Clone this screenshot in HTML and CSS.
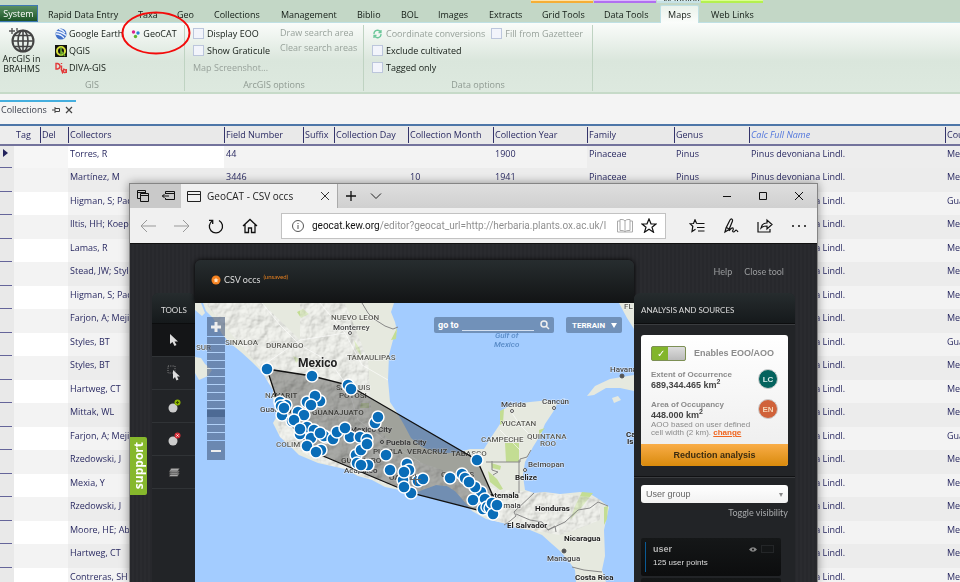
FILE: index.html
```html
<!DOCTYPE html>
<html lang="en">
<head>
  <meta charset="UTF-8">
  <meta name="viewport" content="width=device-width, initial-scale=1.0">
  <title>BRAHMS - Collections</title>
  <link rel="stylesheet" href="styles.css">
</head>
<body>
  <div class="desktop">

    <header class="ribbon">
      <div class="context-strip">
        <span class="context grid-tools"></span>
        <span class="context data-tools"></span>
        <span class="context mapping">Mapping</span>
        <span class="context web"></span>
      </div>
      <nav class="ribbon-tabs">
        <button class="system">System</button>
        <a href="#" class="w-entry">Rapid Data Entry</a>
        <a href="#" class="w-taxa">Taxa</a>
        <a href="#" class="w-geo">Geo</a>
        <a href="#" class="w-coll">Collections</a>
        <a href="#" class="w-man">Management</a>
        <a href="#" class="w-bib">Biblio</a>
        <a href="#" class="w-bol">BOL</a>
        <a href="#" class="w-img">Images</a>
        <a href="#" class="w-ext">Extracts</a>
        <a href="#" class="w-tool">Grid Tools</a>
        <a href="#" class="w-tool">Data Tools</a>
        <a href="#" class="active">Maps</a>
        <a href="#" class="w-web">Web Links</a>
      </nav>

      <div class="ribbon-panel">
        <section class="group group-gis">
          <div class="group-body">
            <button class="big-button">
              <svg width="26" height="27" viewBox="0 0 26 27" fill="none" stroke="#444" stroke-width="2">
                <circle cx="14" cy="14" r="10.5"/>
                <ellipse cx="14" cy="14" rx="5" ry="10.5" stroke-width="1.6"/>
                <path d="M3.5 14h21M14 3.500v21M5.500 8.500h17M5.500 19.500h17" stroke-width="1.6"/>
                <path d="M3 1v6M0 4h6M8 1v3" stroke="#555" stroke-width="1.400"/>
              </svg>
              ArcGIS in<br>BRAHMS
            </button>
            <div class="stack">
              <button class="tool">
                <svg width="12" height="12" viewBox="0 0 12 12"><circle cx="6" cy="6" r="5.500" fill="#3f6fc8"/><path d="M1 3.500q5 0 10 4M1 6q5 0 8 4M4 1q4 1 6 4" stroke="#e8f0ff" stroke-width="1.300" fill="none"/></svg>
                Google Earth
              </button>
              <button class="tool">
                <svg width="12" height="12" viewBox="0 0 12 12"><path fill="#111" d="M0 0h12v12H0z"/><circle cx="6" cy="6" r="4" fill="none" stroke="#d8e03c" stroke-width="2"/><path d="M6 2v9M6 6l4 5" stroke="#6fae2c" stroke-width="1.500"/></svg>
                QGIS
              </button>
              <button class="tool">
                <svg width="12" height="12" viewBox="0 0 12 12" fill="none" stroke="#e23a3a" stroke-width="1.400"><path d="M1 1.500v5.500h1.500q2.500-.5 2.500-2.700T2.500 1.500zM6.500 3.500V7M6.500 1v1M6 6.500l1.500 4 1.500-4M11.500 7v4M11 9a1.300 1.500 0 1 0 0 .2"/></svg>
                DIVA-GIS
              </button>
            </div>
            <div class="stack">
              <button class="tool geocat">
                <svg width="10" height="10" viewBox="0 0 10 10"><circle cx="2.500" cy="3" r="1.700" fill="#e0218a"/><circle cx="7" cy="4" r="1.700" fill="#2484d8"/><circle cx="4.500" cy="7.500" r="1.700" fill="#5cb531"/></svg>
                GeoCAT
                <svg class="highlight" width="70" height="44" viewBox="0 0 70 44"><ellipse cx="35" cy="22" rx="33.500" ry="20.500" fill="none" stroke="#f30b0b" stroke-width="2"/></svg>
              </button>
            </div>
          </div>
          <h3>GIS</h3>
        </section>

        <section class="group group-options">
          <div class="group-body">
            <div class="stack">
              <label class="tool"><input type="checkbox"> Display EOO</label>
              <label class="tool"><input type="checkbox"> Show Graticule</label>
              <button class="tool" disabled>Map Screenshot...</button>
            </div>
            <div class="stack tight">
              <button class="tool" disabled>Draw search area</button>
              <button class="tool" disabled>Clear search areas</button>
            </div>
          </div>
          <h3>ArcGIS options</h3>
        </section>

        <section class="group group-data">
          <div class="group-body">
            <div class="stack">
              <button class="tool" disabled>
                <svg width="11" height="10" viewBox="0 0 10 10" fill="none" stroke="#6cc79a" stroke-width="1.300"><path d="M1.500 5a3.500 3.500 0 0 1 6.500-2M8.500 5a3.500 3.500 0 0 1-6.500 2M8.500 1v2.500H6M1.500 9V6.500H4"/></svg>
                Coordinate conversions
              </button>
              <label class="tool"><input type="checkbox"> Exclude cultivated</label>
              <label class="tool"><input type="checkbox"> Tagged only</label>
            </div>
            <div class="stack">
              <label class="tool disabled"><input type="checkbox" disabled> Fill from Gazetteer</label>
            </div>
          </div>
          <h3>Data options</h3>
        </section>
      </div>
    </header>

    <div class="doc-tabs">
      <div class="doc-tab">
        Collections
        <svg width="8" height="8" viewBox="0 0 8 8" fill="none" stroke="#444"><path d="M0 4h3M3 1v6M3 2.500h4.500v3H3"/></svg>
        <button aria-label="Close tab"><svg width="8" height="8" viewBox="0 0 8 8" stroke="#444" stroke-width="1.200"><path d="M1 1l6 6M7 1l-6 6"/></svg></button>
      </div>
    </div>

    <table class="records">
      <colgroup>
        <col class="c-head"><col class="c-tag"><col class="c-del"><col class="c-collectors">
        <col class="c-number"><col class="c-suffix"><col class="c-day"><col class="c-month">
        <col class="c-year"><col class="c-family"><col class="c-genus"><col class="c-name"><col>
      </colgroup>
      <thead>
        <tr><th class="row-head"></th><th>Tag</th><th>Del</th><th>Collectors</th><th>Field Number</th><th>Suffix</th><th>Collection Day</th><th>Collection Month</th><th>Collection Year</th><th>Family</th><th>Genus</th><th class="calc">Calc Full Name</th><th>Country</th></tr>
      </thead>
      <tbody>
        <tr class="current"><td class="row-head"><svg width="5" height="8" viewBox="0 0 5 8"><path d="M0 0l5 4-5 4z" fill="#22225c"/></svg></td><td class="mark"></td><td class="mark"></td><td class="editing">Torres, R</td><td>44</td><td></td><td></td><td></td><td>1900</td><td class="locked">Pinaceae</td><td class="locked">Pinus</td><td class="locked">Pinus devoniana Lindl.</td><td class="locked">Mexico</td></tr>
        <tr><td class="row-head"></td><td class="mark"></td><td class="mark"></td><td>Martínez, M</td><td>3446</td><td></td><td></td><td>10</td><td>1941</td><td>Pinaceae</td><td>Pinus</td><td>Pinus devoniana Lindl.</td><td>Mexico</td></tr>
        <tr><td class="row-head"></td><td class="mark"></td><td class="mark"></td><td>Higman, S; Pac</td><td colspan="7"></td><td>Pinus devoniana Lindl.</td><td>Guatemala</td></tr>
        <tr><td class="row-head"></td><td class="mark"></td><td class="mark"></td><td>Iltis, HH; Koep</td><td colspan="7"></td><td>Pinus devoniana Lindl.</td><td>Mexico</td></tr>
        <tr><td class="row-head"></td><td class="mark"></td><td class="mark"></td><td>Lamas, R</td><td colspan="7"></td><td>Pinus devoniana Lindl.</td><td>Mexico</td></tr>
        <tr><td class="row-head"></td><td class="mark"></td><td class="mark"></td><td>Stead, JW; Styles</td><td colspan="7"></td><td>Pinus devoniana Lindl.</td><td>Mexico</td></tr>
        <tr><td class="row-head"></td><td class="mark"></td><td class="mark"></td><td>Higman, S; Pac</td><td colspan="7"></td><td>Pinus devoniana Lindl.</td><td>Mexico</td></tr>
        <tr><td class="row-head"></td><td class="mark"></td><td class="mark"></td><td>Farjon, A; Mejia</td><td colspan="7"></td><td>Pinus devoniana Lindl.</td><td>Mexico</td></tr>
        <tr><td class="row-head"></td><td class="mark"></td><td class="mark"></td><td>Styles, BT</td><td colspan="7"></td><td>Pinus devoniana Lindl.</td><td>Guatemala</td></tr>
        <tr><td class="row-head"></td><td class="mark"></td><td class="mark"></td><td>Styles, BT</td><td colspan="7"></td><td>Pinus devoniana Lindl.</td><td>Mexico</td></tr>
        <tr><td class="row-head"></td><td class="mark"></td><td class="mark"></td><td>Hartweg, CT</td><td colspan="7"></td><td>Pinus devoniana Lindl.</td><td>Mexico</td></tr>
        <tr><td class="row-head"></td><td class="mark"></td><td class="mark"></td><td>Mittak, WL</td><td colspan="7"></td><td>Pinus devoniana Lindl.</td><td>Mexico</td></tr>
        <tr><td class="row-head"></td><td class="mark"></td><td class="mark"></td><td>Farjon, A; Mejia</td><td colspan="7"></td><td>Pinus devoniana Lindl.</td><td>Guatemala</td></tr>
        <tr><td class="row-head"></td><td class="mark"></td><td class="mark"></td><td>Rzedowski, J</td><td colspan="7"></td><td>Pinus devoniana Lindl.</td><td>Mexico</td></tr>
        <tr><td class="row-head"></td><td class="mark"></td><td class="mark"></td><td>Mexia, Y</td><td colspan="7"></td><td>Pinus devoniana Lindl.</td><td>Mexico</td></tr>
        <tr><td class="row-head"></td><td class="mark"></td><td class="mark"></td><td>Rzedowski, J</td><td colspan="7"></td><td>Pinus devoniana Lindl.</td><td>Mexico</td></tr>
        <tr><td class="row-head"></td><td class="mark"></td><td class="mark"></td><td>Moore, HE; Abbe</td><td colspan="7"></td><td>Pinus devoniana Lindl.</td><td>Mexico</td></tr>
        <tr><td class="row-head"></td><td class="mark"></td><td class="mark"></td><td>Hartweg, CT</td><td colspan="7"></td><td>Pinus devoniana Lindl.</td><td>Mexico</td></tr>
        <tr><td class="row-head"></td><td class="mark"></td><td class="mark"></td><td>Contreras, SH</td><td colspan="7"></td><td>Pinus devoniana Lindl.</td><td>Mexico</td></tr>
      </tbody>
    </table>

    <div class="window">
      <div class="title-bar">
        <div class="tab-tools">
          <button aria-label="Tabs set aside"><svg width="12" height="12" viewBox="0 0 12 12" fill="none" stroke="#111"><path d="M3.500 8.500h-3v-8h8v3M.5 2.500h8M3.500 3.500h8v8h-8zM3.500 5.500h8"/></svg></button>
          <button aria-label="Set tabs aside"><svg width="13" height="10" viewBox="0 0 13 10" fill="none" stroke="#111"><path d="M3.500 3V.5h9v8h-9V7M3.500 2.500h9M0 5h7M2.500 3L.5 5l2 2"/></svg></button>
        </div>
        <div class="tab">
          <svg width="14" height="12" viewBox="0 0 14 12" fill="none" stroke="#222"><path d="M.5 1.500h13v10H.5zM.5 4.500h13"/></svg>
          <span>GeoCAT - CSV occs</span>
          <button aria-label="Close tab"><svg width="10" height="10" viewBox="0 0 10 10" stroke="#333"><path d="M1 1l8 8M9 1L1 9"/></svg></button>
        </div>
        <button class="new-tab" aria-label="New tab"><svg width="12" height="12" viewBox="0 0 12 12" stroke="#111" stroke-width="1.300"><path d="M6 1v10M1 6h10"/></svg></button>
        <button aria-label="Tab previews"><svg width="12" height="12" viewBox="0 0 12 12" fill="none" stroke="#222"><path d="M1 3.500l5 5 5-5"/></svg></button>
        <div class="window-buttons">
          <button aria-label="Minimize"><svg width="10" height="10" viewBox="0 0 10 10" stroke="#111"><path d="M1 5.500h8"/></svg></button>
          <button aria-label="Maximize"><svg width="10" height="10" viewBox="0 0 10 10" fill="none" stroke="#111"><path d="M1.500 1.500h7v7h-7z"/></svg></button>
          <button aria-label="Close"><svg width="10" height="10" viewBox="0 0 10 10" stroke="#111"><path d="M1 1l8 8M9 1L1 9"/></svg></button>
        </div>
      </div>

      <div class="nav-bar">
        <button aria-label="Back"><svg width="16" height="14" viewBox="0 0 16 14" fill="none" stroke="#999"><path d="M16 7H1M7 1L1 7l6 6"/></svg></button>
        <button aria-label="Forward"><svg width="16" height="14" viewBox="0 0 16 14" fill="none" stroke="#999"><path d="M0 7h15M9 1l6 6-6 6"/></svg></button>
        <button aria-label="Refresh"><svg width="16" height="16" viewBox="0 0 16 16" fill="none" stroke="#111" stroke-width="1.300"><path d="M11 2.500A6.600 6.600 0 1 1 4.500 2.700M4.700 6V2.300H1"/></svg></button>
        <button aria-label="Home"><svg width="16" height="16" viewBox="0 0 16 16" fill="none" stroke="#111" stroke-width="1.300"><path d="M1 8l7-6.500L15 8M3 6.500v8h3.500V10h3v4.500H13v-8"/></svg></button>
        <div class="address">
          <svg width="12" height="12" viewBox="0 0 12 12" fill="none" stroke="#555"><circle cx="6" cy="6" r="5.500"/><path d="M6 5v4M6 3v1"/></svg>
          <input type="text" aria-label="Address" value="geocat.kew.org/editor?geocat_url=http://herbaria.plants.ox.ac.uk/l">
          <svg width="16" height="14" viewBox="0 0 16 14" fill="none" stroke="#aaa"><path d="M8 2v11M8 2Q7 .5 5 .5H3v11h2q2 0 3 1.500M8 2q1-1.500 3-1.500h2v11h-2q-2 0-3 1.500M3 2H.5v11h15V2H13"/></svg>
          <svg width="16" height="15" viewBox="0 0 16 15" fill="none" stroke="#111" stroke-width="1.200"><path d="M8 1l2 4.800 5 .2-4 3.200 1.500 5L8 11.300l-4.500 2.900L5 9.200 1 6l5-.2z"/></svg>
        </div>
        <div class="nav-tools">
          <button aria-label="Hub"><svg width="16" height="14" viewBox="0 0 16 14" fill="none" stroke="#111" stroke-width="1.200"><path d="M10 4.500L7.500 4.300 6 .8 4.500 4.500 1 4.700l2.800 2.500L3 12.500l3.500-2.300M9 4.500h6.500M8 8.500h7.500M9 12h6.500"/></svg></button>
          <button aria-label="Make a web note"><svg width="16" height="16" viewBox="0 0 16 16" fill="none" stroke="#111" stroke-width="1.200"><path d="M2 14l1-4 4-8q1-1.500 2-.8t.4 2L6 11.500zM3.500 9.500l2.500 1.500M6 13q3-4 4-3t-.5 3q1 2 2.500 0t3 1"/></svg></button>
          <button aria-label="Share"><svg width="16" height="15" viewBox="0 0 16 15" fill="none" stroke="#111" stroke-width="1.200"><path d="M1 4v10h12v-3M4 10q1-5 6-5V2l5 4.500L10 11V8Q6 8 4 10z"/></svg></button>
          <button aria-label="More"><svg width="16" height="4" viewBox="0 0 16 4" fill="#111"><circle cx="2" cy="2" r="1"/><circle cx="8" cy="2" r="1"/><circle cx="14" cy="2" r="1"/></svg></button>
        </div>
      </div>

      <main class="page">
        <div class="page-links">
          <a href="#">Help</a>
          <a href="#">Close tool</a>
        </div>
        <button class="support">support</button>

        <div class="editor">
          <aside class="tools">
            <h2>TOOLS</h2>
            <button class="active" aria-label="Select"><svg width="10" height="14" viewBox="0 0 10 14" fill="#ddd"><path d="M1 1v10l2.500-2 2 4 2-1-2-3.500H9z"/></svg></button>
            <button aria-label="Select area"><svg width="14" height="16" viewBox="0 0 14 16"><path d="M1 1h7v7H1z" fill="none" stroke="#888" stroke-dasharray="1 1.300"/><path d="M6 5v9l2-2 1.500 3.500 2-1L10 11.500h3z" fill="#ddd"/></svg></button>
            <button aria-label="Add point"><svg width="14" height="14" viewBox="0 0 14 14"><circle cx="6" cy="9" r="4.500" fill="#ccc"/><circle cx="10.500" cy="3.500" r="3" fill="#8db600"/><path d="M10.500 2v3M9 3.500h3" stroke="#3c4d00"/></svg></button>
            <button aria-label="Delete point"><svg width="14" height="14" viewBox="0 0 14 14"><circle cx="6" cy="9" r="4.500" fill="#ccc"/><circle cx="10.500" cy="3.500" r="3" fill="#d6303a"/><path d="M9.500 2.500l2 2M11.500 2.500l-2 2" stroke="#fff"/></svg></button>
            <button aria-label="Layers"><svg width="12" height="10" viewBox="0 0 12 10" fill="#aaa" stroke="#333" stroke-width=".5"><path d="M1 9.500l2-3.500h8.500l-2 3.500zM1 7.500L3 4h8.500l-2 3.500zM1 5.300l2-4h8.500l-2 4z"/></svg></button>
          </aside>

          <section class="map-panel">
            <h1>
              <svg width="10" height="10" viewBox="0 0 10 10"><circle cx="5" cy="5" r="4.500" fill="#f58220"/><path d="M5 2.500l.8 1.700 1.700.3-1.200 1.200.3 1.800L5 6.700l-1.600.8.3-1.800-1.200-1.200 1.700-.3z" fill="#ffe3c4"/></svg>
              CSV occs <sup>(unsaved)</sup>
            </h1>
            <div class="map">
              <svg class="map-canvas" viewBox="195 303 439 279" preserveAspectRatio="xMidYMid slice">
                <defs>
                  <filter id="relief" x="0" y="0" width="100%" height="100%">
                    <feTurbulence type="fractalNoise" baseFrequency=".09" numOctaves="4" seed="8"/>
                    <feDiffuseLighting surfaceScale="3" lighting-color="#fff"><feDistantLight azimuth="225" elevation="55"/></feDiffuseLighting>
                  </filter>
                  <clipPath id="land-clip"><use href="#land"/></clipPath>
                  <clipPath id="hills"><path d="M205 303L262 303 300 340 300 303 345 303 368 360 372 420 400 455 470 480 500 490 540 492 600 498 600 520 575 530 560 535 500 525 440 486 410 492 320 462 280 440 275 400 262 370z"/></clipPath>
                </defs>
                <path fill="#a3ccff" d="M195 303h439v279H195z"/>
                <path id="land" fill="#e6e9df" d="M203 303L206 311 213 318 222 334 230 343 241 352 252 362 262 372 268 382 273 390 273 400 279 408 277 416 273 423 280 437 290 446 299 455 318 463 345 469 358 476 372 480 385 487 400 490 412 494 425 489 436 485 447 486 455 491 463 500 472 511 486 519 507 524 516 528 530 530 542 535 552 544 560 551 568 560 575 570 576 582 606 582 602 570 605 556 604 530 609 507 600 500 592 495 580 492 560 494 545 492 534 493 525 490 523 476 525 462 533 447 541 434 545 424 553 412 557 404 550 400 530 402 513 404 502 410 500 424 492 436 484 449 477 449 470 449 460 452 447 453 435 452 422 447 411 438 403 423 396 411 390 402 388 380 389 355 393 340 397 331 395 322 391 312 394 303z"/>
                <path fill="#e6e9df" d="M195 357L201 358 205 364 212 370 208 376 199 380 195 373zM195 303h6l4 10-3 3-7-6zM587 396L595 386 610 379 634 375 634 391 620 388 606 388 594 395zM612 398l6-2 3 4-7 3zM619 303h15v26l-7-11z"/>
                <g fill="#c3dd93">
                  <path d="M505 443h14v19h-13zM491 463l10 3-1 4-8-2zM500 411l4-2-1 14-3 2zM582 492l11 1-12 15-11 12 5-14zM297 312l6-3 6 5-8 4zM361 403h8v5h-9zM391 340l6-12-1 11zM539 430l6-2-6 7zM604 507l4-1-1 13-3 6zM354 340l6 9 1 7-5-7zM488 471l9 8 6 10-3 1-10-8zM293 356l7 3-4 4z"/>
                </g>
                <g clip-path="url(#land-clip)">
                  <g clip-path="url(#hills)"><path class="relief" d="M195 303h439v279H195z" filter="url(#relief)"/></g>
                </g>
                <g fill="none" stroke="#fff" opacity=".6">
                  <path d="M262 303L280 325 300 345 330 362 348 387 358 420 385 440 420 462M320 303L345 333 362 365 388 380M510 410L520 425 535 440M500 430L520 450M345 333L300 340 262 366"/>
                </g>
                <path fill="none" stroke="#888" d="M362 303L368 313 374 319 385 326 393 329 398 327M486 462h34v-3M492 461v9l6 2-5 3M519 460v33M534 493L514 512 516 516 510 521 504 525M516 514L530 520 542 522 548 530 555 526 556 532M548 530L565 522 578 510 590 508 598 502 608 506M572 567L584 570 602 572M520 459L527 457 531 450"/>

                <g class="map-labels">
                  <text x="331" y="320">NUEVO LEON</text>
                  <text class="town" x="333" y="330">Monterrey</text>
                  <text x="347" y="360">TAMAULIPAS</text>
                  <text x="225" y="345">SINALOA</text>
                  <text x="266" y="348">DURANGO</text>
                  <text x="196" y="350">SUR</text>
                  <text class="country" x="298" y="367">Mexico</text>
                  <text class="sea" x="495" y="338">Gulf of</text>
                  <text class="sea" x="494" y="347">Mexico</text>
                  <text x="265" y="398">NAYARIT</text>
                  <text class="town" x="260" y="412">Guadalajara</text>
                  <text x="336" y="390">SAN LUIS</text>
                  <text x="339" y="398">POTOSI</text>
                  <text x="312" y="415">GUANAJUATO</text>
                  <text x="276" y="447">COLIMA</text>
                  <text class="town" x="350" y="432">Mexico City</text>
                  <text class="town" x="386" y="445">Puebla City</text>
                  <text x="373" y="454">PUEBLA</text>
                  <text x="407" y="454">VERACRUZ</text>
                  <text x="451" y="456">TABASCO</text>
                  <text x="341" y="463">GUERRERO</text>
                  <text class="town" x="344" y="473">Acapulco</text>
                  <text x="389" y="480">OAXACA</text>
                  <text x="441" y="477">CHIAPAS</text>
                  <text class="town" x="501" y="407">Mérida</text>
                  <text class="town" x="542" y="404">Cancún</text>
                  <text x="501" y="426">YUCATAN</text>
                  <text x="481" y="442">CAMPECHE</text>
                  <text x="527" y="439">QUINTANA</text>
                  <text x="540" y="446">ROO</text>
                  <text class="town" x="528" y="467">Belmopan</text>
                  <text class="nation" x="515" y="480">Belize</text>
                  <text class="nation" x="480" y="498">Guatemala</text>
                  <text class="town" x="482" y="508">Guatemala</text>
                  <text class="nation" x="535" y="511">Honduras</text>
                  <text class="nation" x="507" y="528">El Salvador</text>
                  <text class="nation" x="564" y="541">Nicaragua</text>
                  <text class="town" x="547" y="561">Managua</text>
                  <text class="nation" x="575" y="580">Costa Rica</text>
                  <text class="town" x="610" y="372">Havana</text>
                  <text class="nation" x="626" y="437">Ca</text>
                  <text class="nation" x="627" y="444">Is</text>
                  <text x="624" y="309">FL</text>
                </g>
                <g fill="#fff" stroke="#555"><circle cx="350" cy="333" r="1.500"/><circle cx="382" cy="442" r="1.500"/><circle cx="512" cy="411" r="1.500"/><circle cx="554" cy="408" r="1.500"/><circle cx="525" cy="470" r="1.500"/><circle cx="564" cy="551" r="2" fill="#555"/><circle cx="622" cy="376" r="2" fill="#555"/></g>

                <path fill="#000" fill-opacity=".3" stroke="#111" stroke-width="1.300" d="M267 369L312 376 348 385 477 460 497 505 493 514 411 493 316 453 282 415z"/>
                <g class="points">
                  <circle cx="267" cy="369" r="6"/><circle cx="312" cy="376" r="6"/><circle cx="348" cy="385" r="6"/><circle cx="351" cy="389" r="6"/>
                  <circle cx="320" cy="401" r="6"/><circle cx="307" cy="402" r="6"/><circle cx="315" cy="396" r="6"/><circle cx="311" cy="405" r="6"/>
                  <circle cx="280" cy="402" r="6"/><circle cx="286" cy="405" r="6"/><circle cx="282" cy="415" r="6"/><circle cx="281" cy="406" r="6"/><circle cx="284" cy="408" r="6"/>
                  <circle cx="298" cy="412" r="6"/><circle cx="304" cy="415" r="6"/><circle cx="292" cy="421" r="6"/><circle cx="294" cy="420" r="6"/>
                  <circle cx="300" cy="434" r="6"/><circle cx="307" cy="427" r="6"/><circle cx="314" cy="430" r="6"/><circle cx="300" cy="429" r="6"/><circle cx="311" cy="438" r="6"/>
                  <circle cx="326" cy="437" r="6"/><circle cx="324" cy="436" r="6"/><circle cx="320" cy="433" r="6"/><circle cx="333" cy="439" r="6"/>
                  <circle cx="337" cy="432" r="6"/><circle cx="350" cy="437" r="6"/><circle cx="345" cy="428" r="6"/><circle cx="360" cy="437" r="6"/>
                  <circle cx="367" cy="439" r="6"/><circle cx="356" cy="455" r="6"/><circle cx="361" cy="450" r="6"/><circle cx="367" cy="444" r="6"/>
                  <circle cx="368" cy="465" r="6"/><circle cx="357" cy="463" r="6"/><circle cx="361" cy="465" r="6"/><circle cx="375" cy="423" r="6"/><circle cx="378" cy="417" r="6"/>
                  <circle cx="307" cy="446" r="6"/><circle cx="321" cy="450" r="6"/><circle cx="316" cy="452" r="6"/><circle cx="386" cy="455" r="6"/><circle cx="390" cy="470" r="6"/>
                  <circle cx="407" cy="464" r="6"/><circle cx="409" cy="470" r="6"/><circle cx="403" cy="480" r="6"/><circle cx="404" cy="472" r="6"/>
                  <circle cx="411" cy="493" r="6"/><circle cx="404" cy="487" r="6"/><circle cx="418" cy="481" r="6"/><circle cx="423" cy="479" r="6"/>
                  <circle cx="450" cy="478" r="6"/><circle cx="481" cy="492" r="6"/><circle cx="475" cy="487" r="6"/><circle cx="462" cy="474" r="6"/><circle cx="465" cy="478" r="6"/><circle cx="469" cy="482" r="6"/>
                  <circle cx="473" cy="500" r="6"/><circle cx="485" cy="499" r="6"/><circle cx="483" cy="509" r="6"/><circle cx="487" cy="507" r="6"/><circle cx="490" cy="508" r="6"/>
                  <circle cx="492" cy="503" r="6"/><circle cx="493" cy="514" r="6"/><circle cx="497" cy="505" r="6"/><circle cx="477" cy="460" r="6"/>
                </g>
                <path stroke="#666" d="M415.500 474v11M410 479.500h11"/>
              </svg>

              <div class="zoom-control">
                <button aria-label="Zoom in"><svg width="10" height="10" viewBox="0 0 10 10" stroke="#eee" stroke-width="3"><path d="M5 0v10M0 5h10"/></svg></button>
                <input type="range" min="0" max="100" value="76" aria-label="Zoom level">
                <button aria-label="Zoom out"><svg width="10" height="4" viewBox="0 0 10 4" stroke="#eee" stroke-width="2"><path d="M0 2h10"/></svg></button>
              </div>
              <div class="map-controls">
                <label class="go-to">go to <input type="text"><svg width="10" height="10" viewBox="0 0 10 10" fill="none" stroke="#eee" stroke-width="1.500"><circle cx="4" cy="4" r="3"/><path d="M6 6l3 3"/></svg></label>
                <button class="map-type">TERRAIN <svg width="6" height="5" viewBox="0 0 6 5" fill="#fff"><path d="M0 0h6L3 5z"/></svg></button>
              </div>
            </div>
          </section>

          <aside class="analysis">
            <h2>ANALYSIS AND SOURCES</h2>
            <div class="analysis-body">
              <div class="card">
                <div class="card-body">
                  <label class="enable"><input type="checkbox" class="switch" checked> Enables EOO/AOO</label>
                  <div class="measure">
                    <p>Extent of Occurrence<br><strong>689,344.465 km<sup>2</sup></strong></p>
                    <span class="badge lc">LC</span>
                  </div>
                  <div class="measure">
                    <p>Area of Occupancy<br><strong>448.000 km<sup>2</sup></strong></p>
                    <span class="badge en">EN</span>
                  </div>
                  <p class="note">AOO based on user defined<br>cell width (2 km). <a href="#">change</a></p>
                </div>
                <button class="reduction">Reduction analysis</button>
              </div>
            </div>
            <div class="analysis-body sources">
              <div class="select-box">
                <select aria-label="Source group"><option>User group</option></select>
              </div>
              <a href="#" class="toggle-link">Toggle visibility</a>
              <div class="source">
                <div class="source-text">
                  <h4>user</h4>
                  <p>125 user points</p>
                </div>
                <label class="eye"><svg width="8" height="5" viewBox="0 0 8 5"><path d="M0 2.500Q4-2 8 2.500 4 7 0 2.500z" fill="#888"/><circle cx="4" cy="2.500" r="1" fill="#111"/></svg><input type="checkbox" aria-label="Show user points"></label>
              </div>
              <div class="source next"></div>
            </div>
          </aside>
        </div>
      </main>
    </div>
  </div>
</body>
</html>
```
FILE: styles.css
```css
* {
  box-sizing: border-box;
}

body {
  margin: 0;
  font-family: "Open Sans", "Noto Sans", sans-serif;
  font-size: 9px;
  background: #f3f3f3;
  color: #141c16;
}

button, input, select {
  font: inherit;
  color: inherit;
  margin: 0;
}

button {
  display: flex;
  align-items: center;
  justify-content: center;
  padding: 0;
  border: none;
  background: none;
}

a {
  color: inherit;
  text-decoration: none;
}

h1, h2, h3, h4, p {
  margin: 0;
  font-weight: normal;
}

svg {
  flex: none;
}

.desktop {
  position: relative;
  height: 100vh;
  overflow: hidden;
}

/* ribbon */
.ribbon {
  height: 94px;
  background: #c3d7c6;
  border-bottom: 2px solid #c6dac8;
}

.context-strip {
  display: flex;
  gap: 1px;
  height: 3px;
  padding-left: 531px;
}

.context {
  width: 62px;
  overflow: hidden;
  background: #ffe2a8;
  border-bottom: 2px solid #f5ae35;
}

.data-tools {
  background: #dcb8ff;
  border-color: #b070f0;
}

.mapping {
  width: 43px;
  background: #dceef0;
  border-color: #c6e2e6;
  line-height: 1px;
  text-align: right;
}

.web {
  background: #dcff90;
  border-color: #b4f050;
}

.ribbon-tabs {
  display: flex;
  height: 20px;
  padding-top: 2px;
  border-bottom: 1px solid #bfe0e4;
}

.ribbon-tabs a {
  line-height: 20px;
  white-space: nowrap;
}

.system {
  width: 38px;
  height: 17px;
  margin-right: 10px;
  background: linear-gradient(#5a8f62, #1d5527);
  border: 1px solid #3f78b4;
  border-left: none;
  color: #fff;
}

.w-entry { width: 90px; }
.w-taxa { width: 39px; }
.w-geo { width: 37px; }
.w-coll { width: 67px; }
.w-man { width: 76px; }
.w-bib { width: 44px; }
.w-bol { width: 37px; }
.w-img { width: 51px; }
.w-ext { width: 53px; }
.w-tool { width: 62px; }
.w-web { padding-left: 12px; }

.ribbon-tabs .active {
  width: 39px;
  height: 18px;
  margin-left: -6px;
  background: linear-gradient(#eaf2eb, #fbfdfb);
  border: 1px solid #bfe0e4;
  border-bottom: none;
  border-radius: 2px 2px 0 0;
  line-height: 18px;
  text-align: center;
}

.ribbon-panel {
  display: flex;
  height: 69px;
  padding-top: 2px;
  background: linear-gradient(#fafcfa, #dae6dc 55%, #dde9df);
}

.group {
  display: flex;
  flex-direction: column;
  justify-content: space-between;
  height: 66px;
  border-right: 1px solid #bfd3c2;
}

.group h3 {
  font-size: 9px;
  line-height: 12px;
  color: #8f9a92;
  text-align: center;
}

.group-gis { width: 185px; }
.group-options { width: 179px; }
.group-data { width: 229px; }

.group-body {
  display: flex;
  gap: 8px;
  height: 51px;
}

.group-gis .group-body {
  gap: 12px;
}

.group-options .group-body,
.group-data .group-body {
  padding-left: 8px;
}

.group-options .group-body {
  gap: 10px;
}

.group-data .group-body {
  gap: 6px;
}

.big-button {
  display: block;
  width: 43px;
  line-height: 10px;
  text-align: center;
}

.big-button svg {
  display: block;
  margin: 0 auto;
}

.stack {
  display: flex;
  flex-direction: column;
  flex: none;
}

.tool {
  position: relative;
  display: flex;
  align-items: center;
  justify-content: flex-start;
  gap: 3px;
  height: 17px;
  line-height: 14px;
  white-space: nowrap;
}

.tool:disabled,
.tool.disabled {
  color: #98a29b;
}

.group-gis .tool {
  gap: 2px;
}

.group-gis .group-body .stack + .stack {
  margin-left: -4px;
}

.tool input {
  appearance: none;
  width: 11px;
  height: 11px;
  border: 1px solid #bcc6dc;
  background: #f2f4fb;
}

.tight .tool {
  height: 15px;
}

/* hand-drawn marker around the GeoCAT command */
.highlight {
  position: absolute;
  left: -10px;
  top: -14px;
}

/* document tabs */
.doc-tabs {
  display: flex;
  height: 30px;
  padding-top: 6px;
  background: #f4f4f4;
}

.doc-tab {
  display: flex;
  align-items: center;
  gap: 5px;
  width: 76px;
  height: 17px;
  padding-left: 1px;
  border-top: 2px solid #45aede;
  color: #3b3f4c;
}

/* records grid */
.records {
  width: 100%;
  table-layout: fixed;
  border-collapse: collapse;
  border-top: 2px solid #4d76a8;
  color: #2a2a62;
}

.c-head { width: 14px; }
.c-tag { width: 26px; }
.c-del { width: 28px; }
.c-collectors { width: 156px; }
.c-number { width: 79px; }
.c-suffix { width: 31px; }
.c-day { width: 74px; }
.c-month { width: 85px; }
.c-year { width: 94px; }
.c-family { width: 87px; }
.c-genus { width: 75px; }
.c-name { width: 196px; }

.records th {
  height: 20px;
  padding: 0 0 0 2px;
  overflow: hidden;
  background: linear-gradient(90deg, #33336a 1px, transparent 1px) 0 1px / 100% 16px no-repeat #e9e9e9;
  border-bottom: 2px solid #73739c;
  font-weight: normal;
  line-height: 16px;
  text-align: left;
  white-space: nowrap;
}

.records th.row-head,
.records th.row-head + th {
  background: #ededed;
}

.records .calc {
  color: #4f74dc;
  font-style: italic;
}

.records td {
  height: 23px;
  padding: 0 0 6px 2px;
  overflow: hidden;
  background: #f3f3f3;
  line-height: 16px;
  white-space: nowrap;
}

.records tr:nth-child(even) td {
  height: 24px;
  background: #ececec;
}

.records td.mark {
  background: #fff;
}

.records tr:nth-child(even) td.mark {
  background: #f3f3f3;
}

.records .current td.mark {
  background: #f6f6f6;
}

.records .current .editing {
  background: #fff;
}

.records .current .locked {
  background: #ededed;
}

.records td.row-head,
.records tr:nth-child(even) td.row-head {
  padding: 0 0 8px 3px;
  background: linear-gradient(#65659a, #65659a) 0 100% / 12px 1px no-repeat #e9e9e9;
  line-height: 8px;
}

/* browser window on top of the grid */
.window {
  position: absolute;
  top: 183px;
  right: 142px;
  bottom: 0;
  left: 129px;
  display: flex;
  flex-direction: column;
  border: 1px solid #858585;
  border-bottom: none;
  background: #f0f0f0;
  box-shadow: 0 0 9px rgba(0, 0, 0, 0.4);
  color: #222;
}

.title-bar {
  display: flex;
  align-items: stretch;
  height: 24px;
  background: linear-gradient(#dedede, #d0d0d0);
}

.tab-tools {
  display: flex;
  justify-content: space-around;
  width: 51px;
  background: #c9c9c9;
}

.tab {
  display: flex;
  align-items: center;
  gap: 6px;
  width: 157px;
  padding: 0 7px 0 6px;
  background: #f0f0f0;
  border-right: 1px solid #aaa;
  font-size: 10px;
}

.tab button {
  margin-left: auto;
}

.new-tab {
  margin: 0 13px 0 7px;
}

.window-buttons {
  display: flex;
  gap: 26px;
  margin-left: auto;
  padding-right: 13px;
}

.nav-bar {
  display: flex;
  align-items: center;
  gap: 18px;
  height: 35px;
  padding: 0 10px;
  background: #f0f0f0;
}

.address {
  display: flex;
  align-items: center;
  gap: 8px;
  flex: 1;
  height: 26px;
  margin-left: 5px;
  padding: 0 8px 0 10px;
  border: 1px solid #c2c2c2;
  background: #fff;
}

/* host part of the address is darker than the path */
.address input {
  flex: 1;
  min-width: 0;
  height: 20px;
  padding: 0;
  border: none;
  outline: none;
  background: linear-gradient(90deg, #111 67px, #8a8a8a 67px);
  background-clip: text;
  -webkit-background-clip: text;
  color: transparent;
  font-family: Roboto, sans-serif;
  font-size: 10px;
}

.nav-tools {
  display: flex;
  gap: 18px;
  margin-left: 5px;
}

/* GeoCAT page */
.page {
  position: relative;
  display: flex;
  flex: 1;
  flex-direction: column;
  min-height: 0;
  background: repeating-linear-gradient(90deg, #27282c 0 2px, #2a2b2f 2px 4px);
  border-top: 1px solid #111;
  font-family: Lato, sans-serif;
  color: #ddd;
}

.page-links {
  position: absolute;
  top: 22px;
  right: 33px;
  display: flex;
  gap: 12px;
  color: #9a9c9e;
  line-height: 12px;
}

.support {
  position: absolute;
  top: 193px;
  left: 0;
  width: 17px;
  height: 58px;
  background: #86b82c;
  border-radius: 0 2px 2px 0;
  color: #fff;
  font: bold 12px "Open Sans", sans-serif;
  writing-mode: sideways-lr;
}

.editor {
  display: flex;
  align-items: stretch;
  flex: 1;
  min-height: 0;
  padding: 16px 22px 0;
  overflow: hidden;
}

.tools,
.analysis {
  flex: none;
  margin-top: 33px;
  background: #222427;
  border-radius: 6px 6px 0 0;
}

.tools {
  width: 43px;
}

.tools h2,
.analysis h2 {
  height: 31px;
  background: linear-gradient(#262c2e, #15191b);
  border-bottom: 1px solid #0c0d0e;
  border-radius: 6px 6px 0 0;
  box-shadow: 0 1px #3a3c3f;
  font-size: 8px;
  line-height: 34px;
  padding-left: 9px;
}

.analysis h2 {
  padding-left: 7px;
}

.tools button {
  width: 100%;
  height: 33px;
  border-bottom: 1px solid #303336;
}

.tools .active {
  background: #141517;
}

.map-panel {
  display: flex;
  flex: 1;
  flex-direction: column;
  min-width: 0;
}

.map-panel h1 {
  display: flex;
  align-items: center;
  gap: 3px;
  height: 43px;
  padding: 0 16px 4px;
  background: linear-gradient(#272d2f, #121415);
  border-radius: 6px 6px 0 0;
  box-shadow: 0 0 5px #000;
  font-size: 9px;
}

.map-panel sup {
  padding-bottom: 6px;
  color: #e8801f;
  font-size: 6px;
  line-height: 14px;
}

.map {
  position: relative;
  flex: 1;
  min-height: 0;
  overflow: hidden;
}

.map-canvas {
  display: block;
  width: 100%;
  height: 100%;
}

.relief {
  mix-blend-mode: multiply;
  opacity: 0.5;
}

.map-labels {
  font: 500 8px Roboto, sans-serif;
  fill: #5c5c56;
  stroke: #fff;
  stroke-opacity: 0.6;
  stroke-width: 1px;
  paint-order: stroke;
}

.map-labels .town {
  fill: #444;
}

.map-labels .sea {
  fill: #5a8cc8;
  font-style: italic;
  stroke: none;
}

.map-labels .nation {
  fill: #222;
  font-weight: bold;
}

.map-labels .country {
  fill: #222;
  font-size: 12px;
  font-weight: bold;
}

.points {
  fill: #0a6db8;
  stroke: #fff;
  stroke-width: 1.5px;
}

.zoom-control {
  position: absolute;
  top: 14px;
  left: 12px;
  display: flex;
  flex-direction: column;
  gap: 1px;
  width: 18px;
}

.zoom-control button {
  height: 19px;
  background: rgba(70, 90, 125, 0.6);
}

.zoom-control input {
  appearance: none;
  writing-mode: vertical-lr;
  width: 18px;
  height: 103px;
  background: repeating-linear-gradient(rgba(70, 90, 125, 0.6) 0 7px, rgba(200, 215, 235, 0.4) 7px 8px);
}

.zoom-control input::-webkit-slider-thumb {
  appearance: none;
  width: 18px;
  height: 7px;
  background: #4d6a94;
}

.map-controls {
  position: absolute;
  top: 14px;
  right: 12px;
  display: flex;
  gap: 12px;
  color: #fff;
  font: bold 8px Roboto, sans-serif;
}

.go-to,
.map-type {
  display: flex;
  align-items: center;
  gap: 4px;
  height: 16px;
  padding: 0 4px;
  background: #7191b9;
  border-radius: 2px;
}

.go-to {
  width: 120px;
  font-size: 9px;
}

.go-to input {
  flex: 1;
  min-width: 0;
  height: 12px;
  margin-right: 2px;
  padding: 0;
  background: none;
  border: none;
  border-bottom: 1px solid #d5e0f0;
}

.map-type {
  width: 56px;
  justify-content: space-between;
  padding: 0 5px 0 6px;
}

.analysis {
  width: 161px;
  font-family: "Liberation Sans", Arial, sans-serif;
}

.analysis h2 {
  font-family: Lato, sans-serif;
}

.analysis-body {
  padding: 11px 7px 10px;
  border-bottom: 1px solid #101113;
}

.card {
  overflow: hidden;
  border-radius: 3px;
  background: linear-gradient(#fff, #ececec);
  color: #8b8b8b;
}

.card-body {
  display: flex;
  flex-direction: column;
  height: 109px;
  padding: 11px 10px 0;
  font-size: 8px;
  line-height: 11px;
}

.enable {
  display: flex;
  align-items: center;
  gap: 8px;
  height: 15px;
  margin-bottom: 8px;
  font-size: 9px;
  font-weight: bold;
}

.switch {
  appearance: none;
  width: 35px;
  height: 15px;
  border: 1px solid #7d8f55;
  border-radius: 2px;
  background: linear-gradient(#ddd, #bbb) 100% 0 / 17px 100% no-repeat #82b52a;
}

.switch::before {
  content: "✓";
  display: block;
  padding-left: 5px;
  color: #fff;
  font: bold 10px/13px "DejaVu Sans", sans-serif;
}

.measure {
  display: flex;
  align-items: flex-start;
  justify-content: space-between;
  height: 30px;
}

.measure p {
  font-weight: bold;
  white-space: nowrap;
}

.measure strong {
  color: #444;
  font-size: 9px;
}

.measure sup {
  font-size: 7px;
  line-height: 0;
}

.badge {
  flex: none;
  width: 20px;
  height: 20px;
  border: 1px solid #ccc;
  border-radius: 50%;
  color: #d8ecea;
  font-weight: bold;
  line-height: 19px;
  text-align: center;
}

.lc {
  background: #04635e;
}

.en {
  background: #d0623a;
  color: #f5d4b4;
}

.note {
  margin-top: -8px;
  line-height: 8px;
}

.note a {
  color: #f0641e;
  font-weight: bold;
  text-decoration: underline;
}

.reduction {
  width: 100%;
  height: 22px;
  background: linear-gradient(#f9ad48, #d98a0c);
  color: #3d2c10;
  font-size: 9px;
  font-weight: bold;
}

.sources {
  display: flex;
  flex-direction: column;
  padding-top: 7px;
  border-top: 1px solid #3a3c3f;
}

.select-box {
  display: flex;
  align-items: center;
  height: 18px;
  border-radius: 3px;
  background: linear-gradient(#fff, #f2f2f2);
}

.select-box::after {
  content: "";
  margin: 2px 5px 0 -9px;
  border: 2px solid transparent;
  border-top: 4px solid #888;
  border-bottom: none;
  pointer-events: none;
}

.select-box select {
  appearance: none;
  flex: 1;
  height: 18px;
  padding: 0 5px;
  border: none;
  background: none;
  color: #666;
  font-size: 9px;
}

.toggle-link {
  align-self: flex-end;
  margin: 4px 0 19px;
  color: #a8aaac;
  font: 9px/12px Lato, sans-serif;
}

.source {
  display: flex;
  flex: none;
  justify-content: space-between;
  width: 140px;
  height: 38px;
  padding: 4px 7px 4px 4px;
  background: linear-gradient(#151718, #0c0d0e);
  border-radius: 2px;
  color: #ddd;
  font-size: 8px;
}

.source-text {
  padding-left: 7px;
  border-left: 1px solid #0a5a94;
  line-height: 14px;
  white-space: nowrap;
}

.source h4 {
  color: #b0b0b0;
  font-size: 9px;
  font-weight: bold;
}

.source.next {
  margin-top: 2px;
}

.eye {
  display: flex;
  align-items: center;
  gap: 4px;
  height: 14px;
}

.eye input {
  appearance: none;
  width: 13px;
  height: 8px;
  margin: 0;
  border: 1px solid #242628;
  background: #141617;
}
```
